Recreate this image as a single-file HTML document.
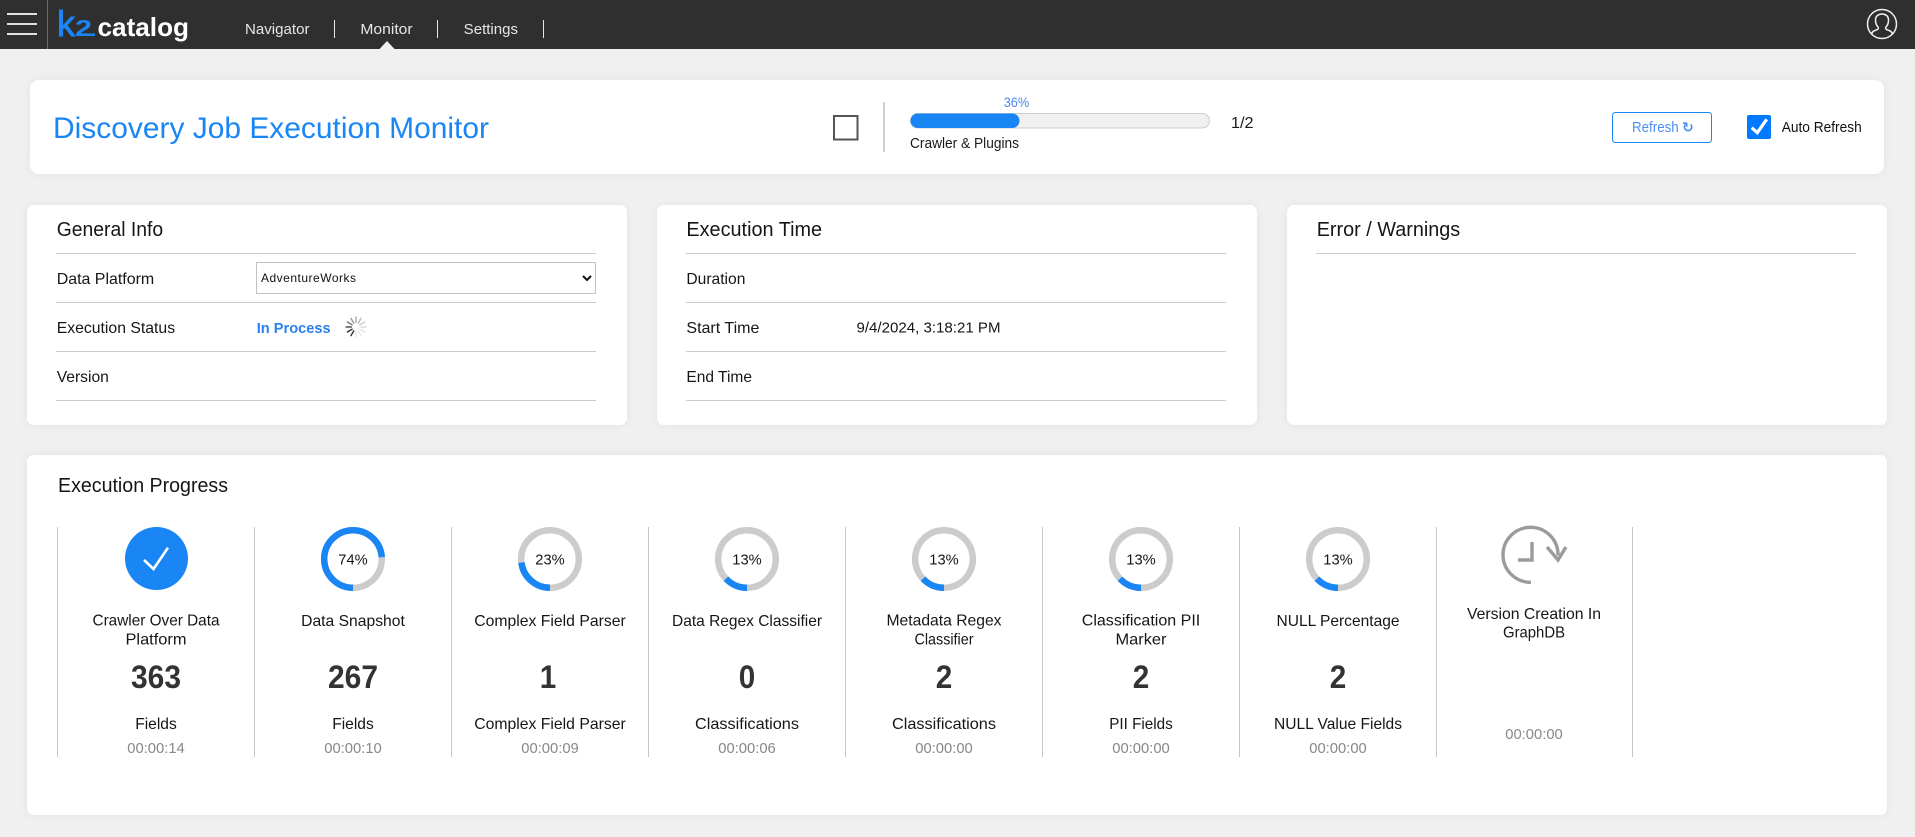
<!DOCTYPE html>
<html lang="en">
<head>
<meta charset="utf-8">
<title>Discovery Job Execution Monitor</title>
<style>
html,body{margin:0;padding:0;width:1915px;height:837px;overflow:hidden;background:#f0f0f0;font-family:"Liberation Sans",sans-serif;}
.header{position:absolute;left:0;top:0;width:1915px;height:49px;background:#2f2f2f;}
.card{position:absolute;background:#fff;border-radius:7px;box-shadow:0 0 10px rgba(0,0,0,.06);}
.rule{position:absolute;height:1px;background:#cbcbcb;}
.vr{position:absolute;width:1px;top:527px;height:230px;background:#c8c8c8;}
select{position:absolute;left:256px;top:262px;width:340px;height:32px;box-sizing:border-box;border:1px solid #c2c2c2;outline:none;background:#fff;color:#111;font-family:"Liberation Sans",sans-serif;font-size:12px;letter-spacing:.5px;padding:0;border-radius:0;}
svg.overlay{position:absolute;left:0;top:0;width:1915px;height:837px;pointer-events:none;}
svg text{font-family:"Liberation Sans",sans-serif;fill:#1a1a1a;}
.nav{font-size:14.5px;fill:#e6e6e6;}
.h{font-size:20px;fill:#161616;}
.l{font-size:16px;fill:#161616;}
.c{font-size:16px;fill:#161616;text-anchor:middle;}
.p{font-size:15px;fill:#161616;text-anchor:middle;}
.n{font-size:32px;font-weight:700;fill:#333;text-anchor:middle;}
.t{font-size:15px;fill:#888;text-anchor:middle;}
</style>
</head>
<body>
<div class="header"></div>
<div class="card" style="left:30px;top:80px;width:1854px;height:94px;border-radius:9px"></div>
<div class="card" style="left:27px;top:205px;width:600px;height:220px"></div>
<div class="card" style="left:657px;top:205px;width:600px;height:220px"></div>
<div class="card" style="left:1287px;top:205px;width:600px;height:220px"></div>
<div class="card" style="left:27px;top:455px;width:1860px;height:360px"></div>

<div class="rule" style="left:56px;top:253px;width:540px"></div>
<div class="rule" style="left:56px;top:302px;width:540px"></div>
<div class="rule" style="left:56px;top:351px;width:540px"></div>
<div class="rule" style="left:56px;top:400px;width:540px"></div>
<div class="rule" style="left:686px;top:253px;width:540px"></div>
<div class="rule" style="left:686px;top:302px;width:540px"></div>
<div class="rule" style="left:686px;top:351px;width:540px"></div>
<div class="rule" style="left:686px;top:400px;width:540px"></div>
<div class="rule" style="left:1316px;top:253px;width:540px"></div>

<div class="vr" style="left:57px"></div>
<div class="vr" style="left:254px"></div>
<div class="vr" style="left:451px"></div>
<div class="vr" style="left:648px"></div>
<div class="vr" style="left:845px"></div>
<div class="vr" style="left:1042px"></div>
<div class="vr" style="left:1239px"></div>
<div class="vr" style="left:1436px"></div>
<div class="vr" style="left:1632px"></div>

<select><option>AdventureWorks</option></select>

<svg class="overlay" viewBox="0 0 1915 837" xmlns="http://www.w3.org/2000/svg">
  <!-- header -->
  <g fill="#e0e0e0">
    <rect x="7" y="13" width="30" height="2"/>
    <rect x="7" y="23" width="30" height="2"/>
    <rect x="7" y="33" width="30" height="2"/>
  </g>
  <rect x="47" y="0" width="1" height="49" fill="#6a6a6a"/>
  <text x="57" y="36" font-size="36" style="fill:#1a85f5;stroke:#1a85f5;stroke-width:.9" textLength="18" lengthAdjust="spacingAndGlyphs">k</text>
  <text x="75" y="36" font-size="23" font-weight="700" style="fill:#1a85f5" textLength="17" lengthAdjust="spacingAndGlyphs">2</text>
  <rect x="88" y="33.5" width="7" height="2.5" fill="#1a85f5"/>
  <text x="97.5" y="36" font-size="26" font-weight="700" style="fill:#fff" textLength="91.5" lengthAdjust="spacingAndGlyphs">catalog</text>

  <text class="nav" x="245" y="34" textLength="64.5" lengthAdjust="spacingAndGlyphs">Navigator</text>
  <text class="nav" x="360.4" y="34" textLength="52.2" lengthAdjust="spacingAndGlyphs">Monitor</text>
  <text class="nav" x="463.7" y="34" textLength="54.3" lengthAdjust="spacingAndGlyphs">Settings</text>
  <g fill="#e6e6e6">
    <rect x="334" y="20" width="1" height="18"/>
    <rect x="437" y="20" width="1" height="18"/>
    <rect x="543" y="20" width="1" height="18"/>
  </g>
  <polygon points="379.5,49 387,41 394.5,49" fill="#f0f0f0"/>

  <g fill="none" stroke="#f0f0f0" stroke-width="1.5">
    <circle cx="1882" cy="24" r="14.5"/>
    <path d="M1871.5 34.5C1872 31 1875 30.5 1877.5 29.5C1878.5 29 1878.5 27.5 1878 27C1876 25 1875.5 22 1875.5 20C1875.5 16 1878.5 14 1882 14C1885.5 14 1888.5 16 1888.5 20C1888.5 22 1888 25 1886 27C1885.5 27.5 1885.5 29 1886.5 29.5C1889 30.5 1892 31 1892.5 34.5"/>
  </g>

  <!-- title card -->
  <text x="53" y="138" font-size="30" style="fill:#1a85f5" textLength="436" lengthAdjust="spacingAndGlyphs">Discovery Job Execution Monitor</text>
  <rect x="834" y="116" width="23.5" height="23.5" fill="#fff" stroke="#555" stroke-width="2"/>
  <rect x="883" y="102" width="2" height="50" fill="#cfcfcf"/>
  <text x="1003.7" y="107" font-size="14" style="fill:#4f86ee" textLength="25.5" lengthAdjust="spacingAndGlyphs">36%</text>
  <rect x="910.5" y="113.5" width="299" height="14.5" rx="7.25" fill="#f0f0f0" stroke="#cccccc"/>
  <rect x="910.5" y="113.5" width="109" height="14.5" rx="7.25" fill="#1a85f5"/>
  <text x="910" y="148" font-size="15" textLength="109" lengthAdjust="spacingAndGlyphs">Crawler &amp; Plugins</text>
  <text x="1231" y="128" font-size="16" textLength="22.5" lengthAdjust="spacingAndGlyphs">1/2</text>

  <rect x="1612.5" y="112.5" width="99" height="30" rx="3" fill="#fff" stroke="#1a85f5"/>
  <text x="1632" y="132" font-size="15" style="fill:#4a8ff2" textLength="46.7" lengthAdjust="spacingAndGlyphs">Refresh</text>
  <text x="1682" y="132" font-size="14" font-weight="700" style="fill:#4a8ff2;font-family:'DejaVu Sans',sans-serif">↻</text>
  <rect x="1747" y="115" width="24" height="24" rx="2" fill="#007bff"/>
  <path d="M1751.7 127.7L1757.3 132.7L1766.7 119.3" fill="none" stroke="#fff" stroke-width="3.2"/>
  <text x="1781.7" y="132" font-size="15" style="fill:#111" textLength="80" lengthAdjust="spacingAndGlyphs">Auto Refresh</text>

  <!-- general info -->
  <text class="h" x="56.7" y="236" textLength="106.5" lengthAdjust="spacingAndGlyphs">General Info</text>
  <text class="l" x="56.7" y="284" textLength="97.5" lengthAdjust="spacingAndGlyphs">Data Platform</text>
  <text class="l" x="56.7" y="333" textLength="118.4" lengthAdjust="spacingAndGlyphs">Execution Status</text>
  <text class="l" x="56.7" y="382" textLength="52.2" lengthAdjust="spacingAndGlyphs">Version</text>
  <text x="256.7" y="333" font-size="15" font-weight="700" style="fill:#2a80f0" textLength="74" lengthAdjust="spacingAndGlyphs">In Process</text>
  <g stroke-width="1.4" stroke-linecap="round" transform="translate(356 327)">
    <line y1="4.5" y2="10" stroke="#333" transform="rotate(30)"/>
    <line y1="4.5" y2="10" stroke="#333" transform="rotate(60)"/>
    <line y1="4.5" y2="10" stroke="#555" transform="rotate(90)"/>
    <line y1="4.5" y2="10" stroke="#777" transform="rotate(120)"/>
    <line y1="4.5" y2="10" stroke="#999" transform="rotate(150)"/>
    <line y1="4.5" y2="10" stroke="#aaa" transform="rotate(180)"/>
    <line y1="4.5" y2="10" stroke="#bbb" transform="rotate(210)"/>
    <line y1="4.5" y2="10" stroke="#ccc" transform="rotate(240)"/>
    <line y1="4.5" y2="10" stroke="#ddd" transform="rotate(270)"/>
    <line y1="4.5" y2="10" stroke="#e4e4e4" transform="rotate(300)"/>
    <line y1="4.5" y2="10" stroke="#e8e8e8" transform="rotate(330)"/>
    <line y1="4.5" y2="10" stroke="#eaeaea" transform="rotate(0)"/>
  </g>

  <!-- execution time -->
  <text class="h" x="686.4" y="236" textLength="135.7" lengthAdjust="spacingAndGlyphs">Execution Time</text>
  <text class="l" x="686.4" y="284" textLength="59" lengthAdjust="spacingAndGlyphs">Duration</text>
  <text class="l" x="686.4" y="333" textLength="73" lengthAdjust="spacingAndGlyphs">Start Time</text>
  <text class="l" x="686.4" y="382" textLength="65.6" lengthAdjust="spacingAndGlyphs">End Time</text>
  <text x="856.5" y="332.5" font-size="15" style="fill:#161616" textLength="144" lengthAdjust="spacingAndGlyphs">9/4/2024, 3:18:21 PM</text>

  <!-- errors -->
  <text class="h" x="1316.7" y="236" textLength="143.5" lengthAdjust="spacingAndGlyphs">Error / Warnings</text>

  <!-- execution progress -->
  <text class="h" x="58" y="492" textLength="170" lengthAdjust="spacingAndGlyphs">Execution Progress</text>

  <!-- col 1 -->
  <circle cx="156.5" cy="558.5" r="31.5" fill="#1a85f5"/>
  <path d="M144 560L153.5 569L168 547.7" fill="none" stroke="#fff" stroke-width="2.6"/>
  <text class="c" x="156" y="625.7" textLength="127" lengthAdjust="spacingAndGlyphs">Crawler Over Data</text>
  <text class="c" x="156" y="644.3" textLength="61" lengthAdjust="spacingAndGlyphs">Platform</text>
  <text class="n" x="156" y="688" textLength="50" lengthAdjust="spacingAndGlyphs">363</text>
  <text class="c" x="156" y="729" textLength="41.6" lengthAdjust="spacingAndGlyphs">Fields</text>
  <text class="t" x="156" y="753" textLength="57.5" lengthAdjust="spacingAndGlyphs">00:00:14</text>

  <!-- col 2 -->
  <circle cx="353" cy="559" r="28.8" fill="none" stroke="#cccccc" stroke-width="6.5"/>
  <circle cx="353" cy="559" r="28.8" fill="none" stroke="#1a85f5" stroke-width="6.5" pathLength="100" stroke-dasharray="74 100" transform="rotate(90 353 559)"/>
  <text class="p" x="353" y="564.5" textLength="29.4" lengthAdjust="spacingAndGlyphs">74%</text>
  <text class="c" x="353" y="626" textLength="103.7" lengthAdjust="spacingAndGlyphs">Data Snapshot</text>
  <text class="n" x="353" y="688" textLength="50" lengthAdjust="spacingAndGlyphs">267</text>
  <text class="c" x="353" y="729" textLength="41.6" lengthAdjust="spacingAndGlyphs">Fields</text>
  <text class="t" x="353" y="753" textLength="57.5" lengthAdjust="spacingAndGlyphs">00:00:10</text>

  <!-- col 3 -->
  <circle cx="550" cy="559" r="28.8" fill="none" stroke="#cccccc" stroke-width="6.5"/>
  <circle cx="550" cy="559" r="28.8" fill="none" stroke="#1a85f5" stroke-width="6.5" pathLength="100" stroke-dasharray="23 100" transform="rotate(90 550 559)"/>
  <text class="p" x="550" y="564.5" textLength="29.4" lengthAdjust="spacingAndGlyphs">23%</text>
  <text class="c" x="550" y="626" textLength="151.4" lengthAdjust="spacingAndGlyphs">Complex Field Parser</text>
  <text class="n" x="548" y="688" textLength="16.5" lengthAdjust="spacingAndGlyphs">1</text>
  <text class="c" x="550" y="729" textLength="151.4" lengthAdjust="spacingAndGlyphs">Complex Field Parser</text>
  <text class="t" x="550" y="753" textLength="57.5" lengthAdjust="spacingAndGlyphs">00:00:09</text>

  <!-- col 4 -->
  <circle cx="747" cy="559" r="28.8" fill="none" stroke="#cccccc" stroke-width="6.5"/>
  <circle cx="747" cy="559" r="28.8" fill="none" stroke="#1a85f5" stroke-width="6.5" pathLength="100" stroke-dasharray="13 100" transform="rotate(90 747 559)"/>
  <text class="p" x="747" y="564.5" textLength="29.4" lengthAdjust="spacingAndGlyphs">13%</text>
  <text class="c" x="747" y="626" textLength="150" lengthAdjust="spacingAndGlyphs">Data Regex Classifier</text>
  <text class="n" x="747" y="688" textLength="16.5" lengthAdjust="spacingAndGlyphs">0</text>
  <text class="c" x="747" y="729" textLength="104" lengthAdjust="spacingAndGlyphs">Classifications</text>
  <text class="t" x="747" y="753" textLength="57.5" lengthAdjust="spacingAndGlyphs">00:00:06</text>

  <!-- col 5 -->
  <circle cx="944" cy="559" r="28.8" fill="none" stroke="#cccccc" stroke-width="6.5"/>
  <circle cx="944" cy="559" r="28.8" fill="none" stroke="#1a85f5" stroke-width="6.5" pathLength="100" stroke-dasharray="13 100" transform="rotate(90 944 559)"/>
  <text class="p" x="944" y="564.5" textLength="29.4" lengthAdjust="spacingAndGlyphs">13%</text>
  <text class="c" x="944" y="625.7" textLength="115" lengthAdjust="spacingAndGlyphs">Metadata Regex</text>
  <text class="c" x="944" y="644.3" textLength="59" lengthAdjust="spacingAndGlyphs">Classifier</text>
  <text class="n" x="944" y="688" textLength="16.5" lengthAdjust="spacingAndGlyphs">2</text>
  <text class="c" x="944" y="729" textLength="104" lengthAdjust="spacingAndGlyphs">Classifications</text>
  <text class="t" x="944" y="753" textLength="57.5" lengthAdjust="spacingAndGlyphs">00:00:00</text>

  <!-- col 6 -->
  <circle cx="1141" cy="559" r="28.8" fill="none" stroke="#cccccc" stroke-width="6.5"/>
  <circle cx="1141" cy="559" r="28.8" fill="none" stroke="#1a85f5" stroke-width="6.5" pathLength="100" stroke-dasharray="13 100" transform="rotate(90 1141 559)"/>
  <text class="p" x="1141" y="564.5" textLength="29.4" lengthAdjust="spacingAndGlyphs">13%</text>
  <text class="c" x="1141" y="625.7" textLength="118.5" lengthAdjust="spacingAndGlyphs">Classification PII</text>
  <text class="c" x="1141" y="644.3" textLength="51" lengthAdjust="spacingAndGlyphs">Marker</text>
  <text class="n" x="1141" y="688" textLength="16.5" lengthAdjust="spacingAndGlyphs">2</text>
  <text class="c" x="1141" y="729" textLength="63.5" lengthAdjust="spacingAndGlyphs">PII Fields</text>
  <text class="t" x="1141" y="753" textLength="57.5" lengthAdjust="spacingAndGlyphs">00:00:00</text>

  <!-- col 7 -->
  <circle cx="1338" cy="559" r="28.8" fill="none" stroke="#cccccc" stroke-width="6.5"/>
  <circle cx="1338" cy="559" r="28.8" fill="none" stroke="#1a85f5" stroke-width="6.5" pathLength="100" stroke-dasharray="13 100" transform="rotate(90 1338 559)"/>
  <text class="p" x="1338" y="564.5" textLength="29.4" lengthAdjust="spacingAndGlyphs">13%</text>
  <text class="c" x="1338" y="626" textLength="123" lengthAdjust="spacingAndGlyphs">NULL Percentage</text>
  <text class="n" x="1338" y="688" textLength="16.5" lengthAdjust="spacingAndGlyphs">2</text>
  <text class="c" x="1338" y="729" textLength="128" lengthAdjust="spacingAndGlyphs">NULL Value Fields</text>
  <text class="t" x="1338" y="753" textLength="57.5" lengthAdjust="spacingAndGlyphs">00:00:00</text>

  <!-- col 8 -->
  <g fill="none" stroke="#9b9b9b" stroke-width="3.4">
    <path d="M1531 582.3A27.5 27.5 0 1 1 1558 555.5"/>
    <path d="M1547 547L1558 560L1566 547"/>
    <path d="M1532 542V560H1518"/>
  </g>
  <text class="c" x="1534" y="619" textLength="134" lengthAdjust="spacingAndGlyphs">Version Creation In</text>
  <text class="c" x="1534" y="637.7" textLength="62" lengthAdjust="spacingAndGlyphs">GraphDB</text>
  <text class="t" x="1534" y="739" textLength="57.5" lengthAdjust="spacingAndGlyphs">00:00:00</text>
</svg>
</body>
</html>
